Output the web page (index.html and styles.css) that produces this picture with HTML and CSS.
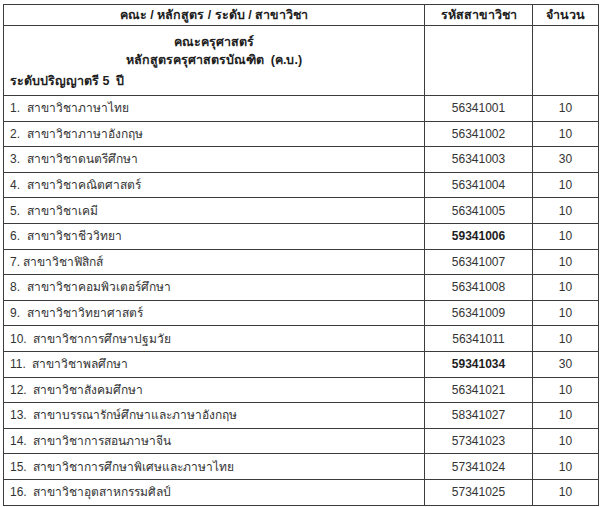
FILE: index.html
```html
<!DOCTYPE html>
<html lang="th">
<head>
<meta charset="utf-8">
<link rel="stylesheet" href="styles.css">
</head>
<body>
<table class="grid">
  <colgroup>
    <col class="c-name">
    <col class="c-code">
    <col class="c-num">
  </colgroup>
  <thead>
    <tr class="head">
      <th>คณะ / หลักสูตร / ระดับ / สาขาวิชา</th>
      <th>รหัสสาขาวิชา</th>
      <th>จำนวน</th>
    </tr>
  </thead>
  <tbody>
    <tr class="faculty">
      <td>
        <div class="fac-center">คณะครุศาสตร์</div>
        <div class="fac-center">หลักสูตรครุศาสตรบัณฑิต&nbsp; (ค.บ.)</div>
        <div class="fac-level">ระดับปริญญาตรี 5&nbsp; ปี</div>
      </td>
      <td></td>
      <td></td>
    </tr>
    <tr class="item"><td>1.&nbsp; สาขาวิชาภาษาไทย</td><td class="code">56341001</td><td class="num">10</td></tr>
    <tr class="item"><td>2.&nbsp; สาขาวิชาภาษาอังกฤษ</td><td class="code">56341002</td><td class="num">10</td></tr>
    <tr class="item"><td>3.&nbsp; สาขาวิชาดนตรีศึกษา</td><td class="code">56341003</td><td class="num">30</td></tr>
    <tr class="item"><td>4.&nbsp; สาขาวิชาคณิตศาสตร์</td><td class="code">56341004</td><td class="num">10</td></tr>
    <tr class="item"><td>5.&nbsp; สาขาวิชาเคมี</td><td class="code">56341005</td><td class="num">10</td></tr>
    <tr class="item"><td>6.&nbsp; สาขาวิชาชีววิทยา</td><td class="code strong">59341006</td><td class="num">10</td></tr>
    <tr class="item"><td>7. สาขาวิชาฟิสิกส์</td><td class="code">56341007</td><td class="num">10</td></tr>
    <tr class="item"><td>8.&nbsp; สาขาวิชาคอมพิวเตอร์ศึกษา</td><td class="code">56341008</td><td class="num">10</td></tr>
    <tr class="item"><td>9.&nbsp; สาขาวิชาวิทยาศาสตร์</td><td class="code">56341009</td><td class="num">10</td></tr>
    <tr class="item"><td>10.&nbsp; สาขาวิชาการศึกษาปฐมวัย</td><td class="code">56341011</td><td class="num">10</td></tr>
    <tr class="item"><td>11.&nbsp; สาขาวิชาพลศึกษา</td><td class="code strong">59341034</td><td class="num">30</td></tr>
    <tr class="item"><td>12.&nbsp; สาขาวิชาสังคมศึกษา</td><td class="code">56341021</td><td class="num">10</td></tr>
    <tr class="item"><td>13.&nbsp; สาขาบรรณารักษ์ศึกษาและภาษาอังกฤษ</td><td class="code">58341027</td><td class="num">10</td></tr>
    <tr class="item"><td>14.&nbsp; สาขาวิชาการสอนภาษาจีน</td><td class="code">57341023</td><td class="num">10</td></tr>
    <tr class="item"><td>15.&nbsp; สาขาวิชาการศึกษาพิเศษและภาษาไทย</td><td class="code">57341024</td><td class="num">10</td></tr>
    <tr class="item"><td>16.&nbsp; สาขาวิชาอุตสาหกรรมศิลป์</td><td class="code">57341025</td><td class="num">10</td></tr>
  </tbody>
</table>
</body>
</html>
```

FILE: styles.css
```css
html, body {
  margin: 0;
  padding: 0;
  background: #ffffff;
}

body {
  font-family: "Liberation Sans", "Noto Sans", sans-serif;
  font-size: 12px;
  line-height: 16px;
  color: #333333;
}

.grid {
  border-collapse: collapse;
  table-layout: fixed;
  width: 595px;
  margin: 4px 0 0 3px;
}

.c-name { width: 421px; }
.c-code { width: 108px; }
.c-num  { width: 66px; }

.grid th,
.grid td {
  border: 1px solid #3c3c3c;
  padding: 0;
  white-space: nowrap;
  line-height: 16px;
}

.head th {
  height: 20px;
  font-weight: bold;
  font-size: 12.5px;
  color: #1e1e1e;
  text-align: center;
  vertical-align: middle;
}

.faculty td {
  height: 69px;
  vertical-align: top;
}

.fac-center,
.fac-level {
  font-weight: bold;
  font-size: 12.5px;
  color: #1e1e1e;
  line-height: 18px;
}

.fac-center {
  text-align: center;
}

.fac-center:first-child {
  margin-top: 7px;
}

.fac-level {
  padding-left: 6px;
  margin-top: 3px;
}

.item td {
  height: 24.6px;
  vertical-align: middle;
}

.item td:first-child {
  padding-left: 6px;
}

.code,
.num {
  text-align: center;
}

.strong {
  font-weight: bold;
  color: #1e1e1e;
}
```
